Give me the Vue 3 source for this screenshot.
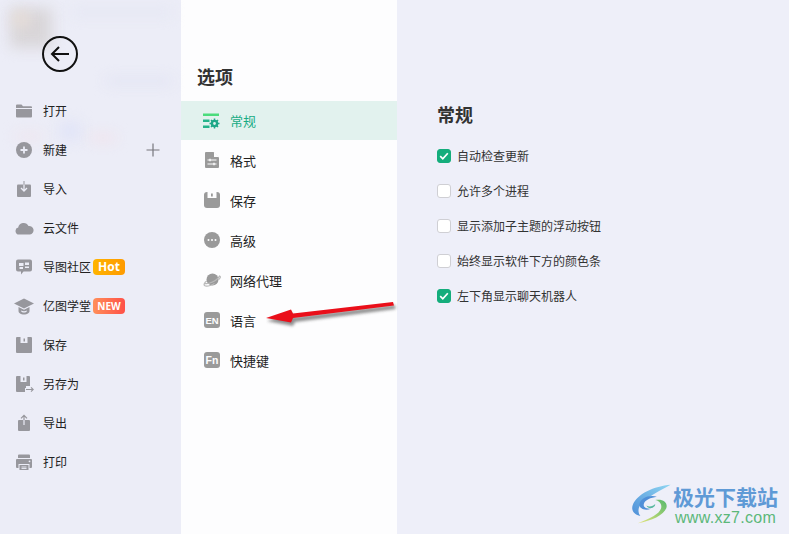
<template>
  <div class="page">
    <aside class="sidebar">
      <div class="blur-layer">
        <span class="blob blob-photo"></span>
        <span class="blob blob-warm"></span>
        <span class="blob blob-title"></span>
        <span class="blob blob-tab"></span>
        <span class="blob blob-blue"></span>
        <span class="blob blob-red"></span>
        <span class="blob blob-pink"></span>
      </div>
      <button class="back">
        <svg width="36" height="36" viewBox="0 0 36 36">
          <circle cx="18" cy="18" r="17" fill="none" stroke="#111" stroke-width="2" />
          <path d="M27 18H10M17 11l-7 7 7 7" fill="none" stroke="#111" stroke-width="2" />
        </svg>
      </button>
      <ul class="menu">
        <li v-for="item in menu" :key="item.label" class="menu-item">
          <svg class="menu-icon" width="20" height="20" viewBox="0 0 20 20" v-html="item.icon"></svg>
          <span class="menu-label">{{ item.label }}</span>
          <span v-if="item.badge" class="badge" :class="item.badgeClass">{{ item.badge }}</span>
          <svg v-if="item.plus" class="plus" width="14" height="14" viewBox="0 0 14 14">
            <path d="M7 .5v13M.5 7h13" stroke="#77777d" stroke-width="1.2" />
          </svg>
        </li>
      </ul>
    </aside>

    <nav class="options">
      <h2 class="options-title">选项</h2>
      <div
        v-for="(tab, i) in tabs"
        :key="tab.label"
        class="tab"
        :class="{ active: i === 0 }"
      >
        <svg class="tab-icon" width="18" height="18" viewBox="0 0 18 18" v-html="tab.icon"></svg>
        <span>{{ tab.label }}</span>
      </div>
    </nav>

    <main class="content">
      <h2 class="content-title">常规</h2>
      <label v-for="row in settings" :key="row.label" class="check-row">
        <span class="check" :class="{ on: row.on }">
          <svg v-if="row.on" width="14" height="14" viewBox="0 0 14 14">
            <path d="M3.2 7.2l2.6 2.6 5-5.6" fill="none" stroke="#fff" stroke-width="1.7" />
          </svg>
        </span>
        <span>{{ row.label }}</span>
      </label>
    </main>

    <svg class="arrow" width="145" height="30" viewBox="0 0 145 30">
      <defs>
        <filter id="arrowShadow" x="-10%" y="-50%" width="120%" height="220%">
          <feGaussianBlur stdDeviation="1.5" />
        </filter>
      </defs>
      <path
        d="M0 16L25 8 27 12 128 0 128.500 4 28 17 26 21Z"
        fill="#444"
        opacity="0.6"
        filter="url(#arrowShadow)"
        transform="translate(1 3)"
      />
      <path d="M0 16L25 7.500 27 11.500 127 0 128 3.500 27 16 25 20.500Z" fill="#ea0f1a" />
    </svg>

    <div class="watermark">
      <svg width="45" height="40" viewBox="0 0 52 50" preserveAspectRatio="none">
        <defs>
          <linearGradient id="swirlBlue" x1="0" y1="1" x2="1" y2="0">
            <stop offset="0" stop-color="#4f8fd8" />
            <stop offset="1" stop-color="#8fd6f2" />
          </linearGradient>
          <linearGradient id="swirlGreen" x1="0" y1="1" x2="1" y2="0">
            <stop offset="0" stop-color="#e6e57a" />
            <stop offset="1" stop-color="#56b96c" />
          </linearGradient>
        </defs>
        <path d="M47 1C28 3 8 12 3 27c-2 7 3 12 9 13C7 33 11 24 20 18 28 12 38 6 47 1Z" fill="url(#swirlBlue)" />
        <path d="M31 16c-9-3-19 2-20 9-1 6 7 9 13 6-5 0-9-2-8-6 1-5 8-8 15-9Z" fill="#4f8fd8" />
        <path d="M29 20c9-2 15 3 13 10-3 9-17 16-33 19 14-6 25-11 27-19 1-5-2-9-7-10Z" fill="url(#swirlGreen)" />
        <path d="M19 27c3 2 8 1 10-2 1 5-8 8-10 2Z" fill="#58b8a0" />
      </svg>
      <div class="watermark-text">
        <div class="watermark-cn">极光下载站</div>
        <div class="watermark-url">www.xz7.com</div>
      </div>
    </div>
  </div>
</template>

<script setup>
const g = '#97979d'

const menu = [
  { label: '打开', icon: `<path fill="${g}" d="M2 4.500a1 1 0 0 1 1-1h4.500l1.500 1.800h8a1 1 0 0 1 1 1V7H2zM2 8h16v7.500a1 1 0 0 1-1 1H3a1 1 0 0 1-1-1z"/>` },
  { label: '新建', plus: true, icon: `<circle cx="10" cy="10" r="8" fill="${g}"/><path d="M10 6.500v7M6.500 10h7" stroke="#ecedf7" stroke-width="1.800"/>` },
  { label: '导入', icon: `<path fill="${g}" d="M3 6.500a1 1 0 0 1 1-1h12a1 1 0 0 1 1 1V17a1 1 0 0 1-1 1H4a1 1 0 0 1-1-1z"/><path d="M10 5.500v6M7 9l3 3 3-3" fill="none" stroke="#ecedf7" stroke-width="1.300"/><path d="M10 2v3.500" stroke="${g}" stroke-width="1"/>` },
  { label: '云文件', icon: `<path fill="${g}" d="M5 16.500a3.500 3.500 0 0 1-.8-6.900A5.500 5.500 0 0 1 14.500 8a4.300 4.300 0 0 1 1.500 8.500z"/>` },
  { label: '导图社区', badge: 'Hot', badgeClass: 'hot', icon: `<path fill="${g}" d="M4 2.500h12a2 2 0 0 1 2 2v8a2 2 0 0 1-2 2H9.500L7 17.500v-3H4a2 2 0 0 1-2-2v-8a2 2 0 0 1 2-2z"/><path fill="#ecedf7" d="M5 6h4.500v3H5zM11 5.500h4V8h-4zM5.500 10H9v2H5.500zM11 9.500h4V11h-4z"/>` },
  { label: '亿图学堂', badge: 'NEW', badgeClass: 'new', icon: `<path fill="${g}" d="M10 2.500L20 7.500l-10 5-10-5z"/><path fill="${g}" d="M4.500 11l5.500 2.800 5.500-2.800V15c0 2-2.500 3.500-5.500 3.500S4.500 17 4.500 15z"/><path fill="#ecedf7" d="M7 14.500c1.500 1 4.500 1 6 0 0 1.500-1.500 2-3 2s-3-.5-3-2z"/>` },
  { label: '保存', icon: `<path fill="${g}" d="M3 2h14a1 1 0 0 1 1 1v14a1 1 0 0 1-1 1H3a1 1 0 0 1-1-1V3a1 1 0 0 1 1-1z"/><path fill="#ecedf7" d="M6.500 2h7v6h-7z"/><path fill="${g}" d="M9.500 3.500h1.500v3H9.500z"/>` },
  { label: '另存为', icon: `<path fill="${g}" d="M3 2h12a1 1 0 0 1 1 1v9h-4v2h-1v4H3a1 1 0 0 1-1-1V3a1 1 0 0 1 1-1z"/><path fill="#ecedf7" d="M6.500 2h6v6h-6z"/><path fill="${g}" d="M9 3.500h1.500v3H9z"/><path d="M12 15.500h7M17 13.300l2.200 2.200-2.200 2.200" fill="none" stroke="${g}" stroke-width="1.100"/>` },
  { label: '导出', icon: `<path fill="${g}" d="M4 8a1 1 0 0 1 1-1h10a1 1 0 0 1 1 1v9a1 1 0 0 1-1 1H5a1 1 0 0 1-1-1z"/><path d="M10 7V2.500M7 5.300l3-3 3 3" fill="none" stroke="${g}" stroke-width="1.200"/><path d="M10 7v5" stroke="#ecedf7" stroke-width="1.200"/>` },
  { label: '打印', icon: `<path fill="${g}" d="M5 2.500h10a1 1 0 0 1 1 1V6H4V3.500a1 1 0 0 1 1-1zM3 7h14a1 1 0 0 1 1 1v7a1 1 0 0 1-1 1h-1.500v-4h-11v4H3a1 1 0 0 1-1-1V8a1 1 0 0 1 1-1z"/><path fill="${g}" d="M5.500 13h9v5h-9z"/><path d="M7.500 15h5M7.500 16.500h5" stroke="#ecedf7" stroke-width=".9"/><circle cx="15.500" cy="9.300" r=".9" fill="#ecedf7"/>` }
]

const k = '#9a9a9a'

const tabs = [
  { label: '常规', icon: `<path fill="#4bdc7c" d="M0 1.500h16V4H0z"/><path fill="#25b38a" d="M0 7.500h6.500V10H0zM0 13.500h6.500V16H0z"/><circle cx="11.500" cy="11.500" r="2.600" fill="none" stroke="#1fa888" stroke-width="2.400"/><path d="M11.500 6.500v2M11.500 14.500v2M6.500 11.500h2M14.500 11.500h2M8 8l1.400 1.400M13.600 13.600L15 15M15 8l-1.400 1.400M9.400 13.600L8 15" stroke="#1fa888" stroke-width="1.500"/>` },
  { label: '格式', icon: `<path fill="${k}" d="M3 1h7.500l5.500 5.500V16a1 1 0 0 1-1 1H3a1 1 0 0 1-1-1V2a1 1 0 0 1 1-1z"/><path fill="#fdfdfe" d="M11 1l5 5h-5z"/><path d="M4.500 9h9M4.500 13h9" stroke="#fdfdfe" stroke-width="1"/><path d="M7 7.800v2.400M11 11.800v2.400" stroke="#fdfdfe" stroke-width="1.400"/>` },
  { label: '保存', icon: `<rect x="1" y="1" width="16" height="16" rx="3" fill="${k}"/><path fill="#fdfdfe" d="M4.500 1h9v6h-9z"/><path fill="${k}" d="M8 2.500h1.800v3H8z"/>` },
  { label: '高级', icon: `<circle cx="9" cy="9" r="8" fill="${k}"/><circle cx="5.500" cy="9" r="1" fill="#fdfdfe"/><circle cx="9" cy="9" r="1" fill="#fdfdfe"/><circle cx="12.500" cy="9" r="1" fill="#fdfdfe"/>` },
  { label: '网络代理', icon: `<circle cx="9.500" cy="8.500" r="6" fill="${k}"/><path d="M2 12.500c3 1 12-2.500 14.500-7.500 1.500.5 1 2-1 3.800M3.700 10C1.500 11.500.5 13.500 1.500 14.500c1.500 1.200 6 .2 10-2" fill="none" stroke="#b9b9b9" stroke-width="1.200"/>` },
  { label: '语言', icon: `<rect x="1" y="1" width="16" height="16" rx="3" fill="${k}"/><text x="9" y="12.500" text-anchor="middle" font-size="9.500" font-weight="700" font-family="Liberation Sans, sans-serif" fill="#fdfdfe">EN</text>` },
  { label: '快捷键', icon: `<rect x="1" y="1" width="16" height="16" rx="3" fill="${k}"/><text x="9" y="13" text-anchor="middle" font-size="10.500" font-weight="700" font-family="Liberation Sans, sans-serif" fill="#fdfdfe">Fn</text>` }
]

const settings = [
  { label: '自动检查更新', on: true },
  { label: '允许多个进程', on: false },
  { label: '显示添加子主题的浮动按钮', on: false },
  { label: '始终显示软件下方的颜色条', on: false },
  { label: '左下角显示聊天机器人', on: true }
]
</script>

<style>
html, body {
  margin: 0;
  background: #eeeff9;
}
</style>

<style scoped>
.page {
  position: relative;
  display: flex;
  width: 789px;
  height: 534px;
  overflow: hidden;
  font-family: "Noto Sans CJK SC", "Liberation Sans", sans-serif;
  color: #222;
  background: #eeeff9;
}

.sidebar {
  position: relative;
  flex: 0 0 181px;
  background: #ecedf7;
}

.blur-layer {
  position: absolute;
  inset: 0 0 auto 0;
  height: 160px;
  pointer-events: none;
}

.blob {
  position: absolute;
  display: block;
  filter: blur(7px);
}

.blob-photo {
  left: 10px;
  top: 8px;
  width: 42px;
  height: 40px;
  background: #d9d6d9;
}

.blob-warm {
  left: 14px;
  top: 12px;
  width: 14px;
  height: 14px;
  background: #ebe0d8;
}

.blob-title {
  left: 72px;
  top: 8px;
  width: 100px;
  height: 8px;
  background: #e4e6f3;
}

.blob-tab {
  left: 106px;
  top: 78px;
  width: 66px;
  height: 6px;
  background: #dfe1f2;
}

.blob-blue {
  left: 60px;
  top: 122px;
  width: 20px;
  height: 18px;
  background: #e0e3f7;
}

.blob-red {
  left: 15px;
  top: 134px;
  width: 28px;
  height: 5px;
  background: #f0e0e8;
}

.blob-pink {
  left: 90px;
  top: 135px;
  width: 26px;
  height: 6px;
  background: #f2dfe8;
}

.back {
  position: absolute;
  left: 42px;
  top: 36px;
  width: 36px;
  height: 36px;
  padding: 0;
  border: 0;
  background: none;
}

.menu {
  position: relative;
  list-style: none;
  margin: 0;
  padding: 91px 0 0 14px;
}

.menu-item {
  display: flex;
  align-items: center;
  height: 39px;
  font-size: 12px;
}

.menu-icon {
  flex: none;
  margin-right: 9px;
}

.menu-label {
  white-space: nowrap;
}

.badge {
  margin-left: 2px;
  width: 32px;
  height: 16px;
  border-radius: 4px;
  color: #fff;
  font-weight: 700;
  text-align: center;
  line-height: 16px;
  font-family: "Noto Sans", "Liberation Sans", sans-serif;
}

.badge.hot {
  font-size: 12px;
  background: linear-gradient(90deg, #ffb400, #fe9a00);
}

.badge.new {
  font-size: 10px;
  background: linear-gradient(90deg, #ff8f5a, #ff5148);
}

.plus {
  margin-left: 79px;
}

.options {
  flex: 0 0 216px;
  background: #fdfdfe;
}

.options-title {
  margin: 0;
  padding: 63px 0 0 16px;
  height: 38px;
  font-size: 18px;
  font-weight: 700;
  line-height: 26px;
  color: #333;
}

.tab {
  display: flex;
  align-items: center;
  height: 40px;
  padding-left: 22px;
  font-size: 13px;
  color: #222;
}

.tab-icon {
  flex: none;
  margin-right: 9px;
}

.tab.active {
  height: 39px;
  background: #e2f2ee;
  color: #17ab84;
}

.content {
  flex: 1;
  padding: 101px 0 0 40px;
}

.content-title {
  margin: 0 0 11px;
  font-size: 18px;
  font-weight: 700;
  line-height: 26px;
  color: #333;
}

.check-row {
  display: flex;
  align-items: center;
  gap: 6px;
  height: 35px;
  font-size: 12px;
  color: #333;
}

.check {
  box-sizing: border-box;
  display: flex;
  align-items: center;
  justify-content: center;
  width: 14px;
  height: 14px;
  border: 1px solid #cfcfd4;
  border-radius: 3px;
  background: #fff;
}

.check.on {
  border-color: #14ad7c;
  background: #14ad7c;
}

.check.on svg {
  flex: none;
}

.arrow {
  position: absolute;
  left: 266px;
  top: 302px;
}

.watermark {
  position: absolute;
  left: 630px;
  top: 484px;
  display: flex;
  align-items: flex-start;
}

.watermark-text {
  margin-left: -2px;
}

.watermark-cn {
  font-size: 21px;
  line-height: 24px;
  font-weight: 700;
  color: #5f9ad6;
  white-space: nowrap;
}

.watermark-url {
  margin-top: 1px;
  padding-left: 2px;
  font-family: "Liberation Sans", sans-serif;
  font-size: 16px;
  line-height: 18px;
  color: #5cb87a;
  letter-spacing: 0.3px;
}
</style>
